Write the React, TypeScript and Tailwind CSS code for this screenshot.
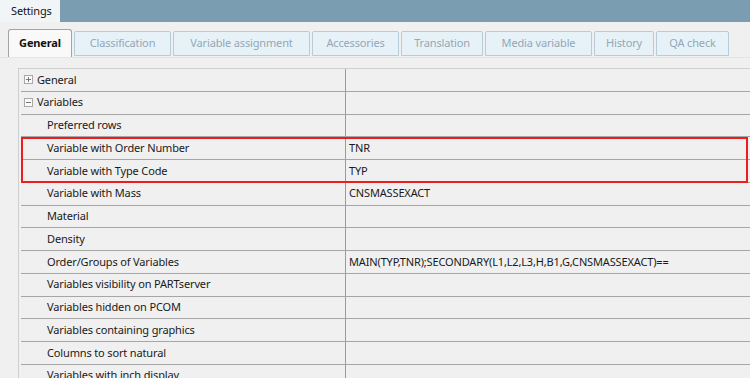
const TABS = [
    { label: 'Classification', w: 'w-[97px]' },
    { label: 'Variable assignment', w: 'w-[137px]' },
    { label: 'Accessories', w: 'w-[87px]' },
    { label: 'Translation', w: 'w-[82px]' },
    { label: 'Media variable', w: 'w-[107px]' },
    { label: 'History', w: 'w-[60px]' },
    { label: 'QA check', w: 'w-[73px]' },
];

type Row = { label: string; value?: string; group?: 'plus' | 'minus' };

const ROWS: Row[] = [
    { label: 'General', group: 'plus' },
    { label: 'Variables', group: 'minus' },
    { label: 'Preferred rows' },
    { label: 'Variable with Order Number', value: 'TNR' },
    { label: 'Variable with Type Code', value: 'TYP' },
    { label: 'Variable with Mass', value: 'CNSMASSEXACT' },
    { label: 'Material' },
    { label: 'Density' },
    { label: 'Order/Groups of Variables', value: 'MAIN(TYP,TNR);SECONDARY(L1,L2,L3,H,B1,G,CNSMASSEXACT)==' },
    { label: 'Variables visibility on PARTserver' },
    { label: 'Variables hidden on PCOM' },
    { label: 'Variables containing graphics' },
    { label: 'Columns to sort natural' },
    { label: 'Variables with inch display' },
];

function Expander({ kind }: { kind: 'plus' | 'minus' }) {
    return (
        <svg width="9" height="9" viewBox="0 0 9 9" className="shrink-0">
            <rect x="0.5" y="0.5" width="8" height="8" fill="#fafafa" stroke="#a8a8a8" />
            <path d="M2 4.5h5" stroke="#777" />
            {kind === 'plus' && <path d="M4.5 2v5" stroke="#777" />}
        </svg>
    );
}

export default function App() {
    return (
        <div className="h-[378px] w-[750px] overflow-hidden bg-[#f0f0f0] font-['Noto_Sans','Open_Sans',sans-serif] text-[11px] tracking-[-0.15px] text-[#1a1a1a]">
            {/* Title strip */}
            <div className="flex h-[22px] bg-[#7a9db2]">
                <div className="flex w-[60px] items-center bg-[#f2f5f8] pl-[11px] text-[#111]">Settings</div>
            </div>

            {/* Tab strip */}
            <div className="flex h-[36px] items-end gap-[2px] border-b border-[#e4e4e4] pl-[8px]">
                <div className="flex h-[28px] w-[64px] items-center justify-center rounded-t-[3px] border border-b-0 border-[#a3a3a3] bg-[#f9f9f9] font-bold text-[#111]">
                    General
                </div>
                {TABS.map((t) => (
                    <div
                        key={t.label}
                        className={`mb-[1px] flex h-[25px] ${t.w} items-center justify-center rounded-t-[2px] border border-[#b6ccd9] bg-[#e7f2f8] text-[#93a7b6]`}
                    >
                        {t.label}
                    </div>
                ))}
            </div>

            {/* Property grid */}
            <div className="ml-[18px] mt-[10px] border-l border-t border-[#cfcfcf] pl-[2px]">
                <div className="relative">
                    {ROWS.map((r, i) => (
                        <div key={i} className="flex h-[22.75px] border-b border-[#a6a6a6]">
                            <div className="flex w-[325px] items-center gap-[4px] border-r border-[#9a9a9a]">
                                {r.group ? (
                                    <>
                                        <span className="ml-[3px] flex">
                                            <Expander kind={r.group} />
                                        </span>
                                        <span>{r.label}</span>
                                    </>
                                ) : (
                                    <span className="pl-[26px]">{r.label}</span>
                                )}
                            </div>
                            <div className="flex flex-1 items-center pl-[3px]">{r.value ?? ''}</div>
                        </div>
                    ))}
                    {/* highlight around TNR / TYP rows */}
                    <div className="pointer-events-none absolute left-0 top-[68px] h-[46px] w-[727px] border-2 border-[#ee1c1c]" />
                </div>
            </div>
        </div>
    );
}
